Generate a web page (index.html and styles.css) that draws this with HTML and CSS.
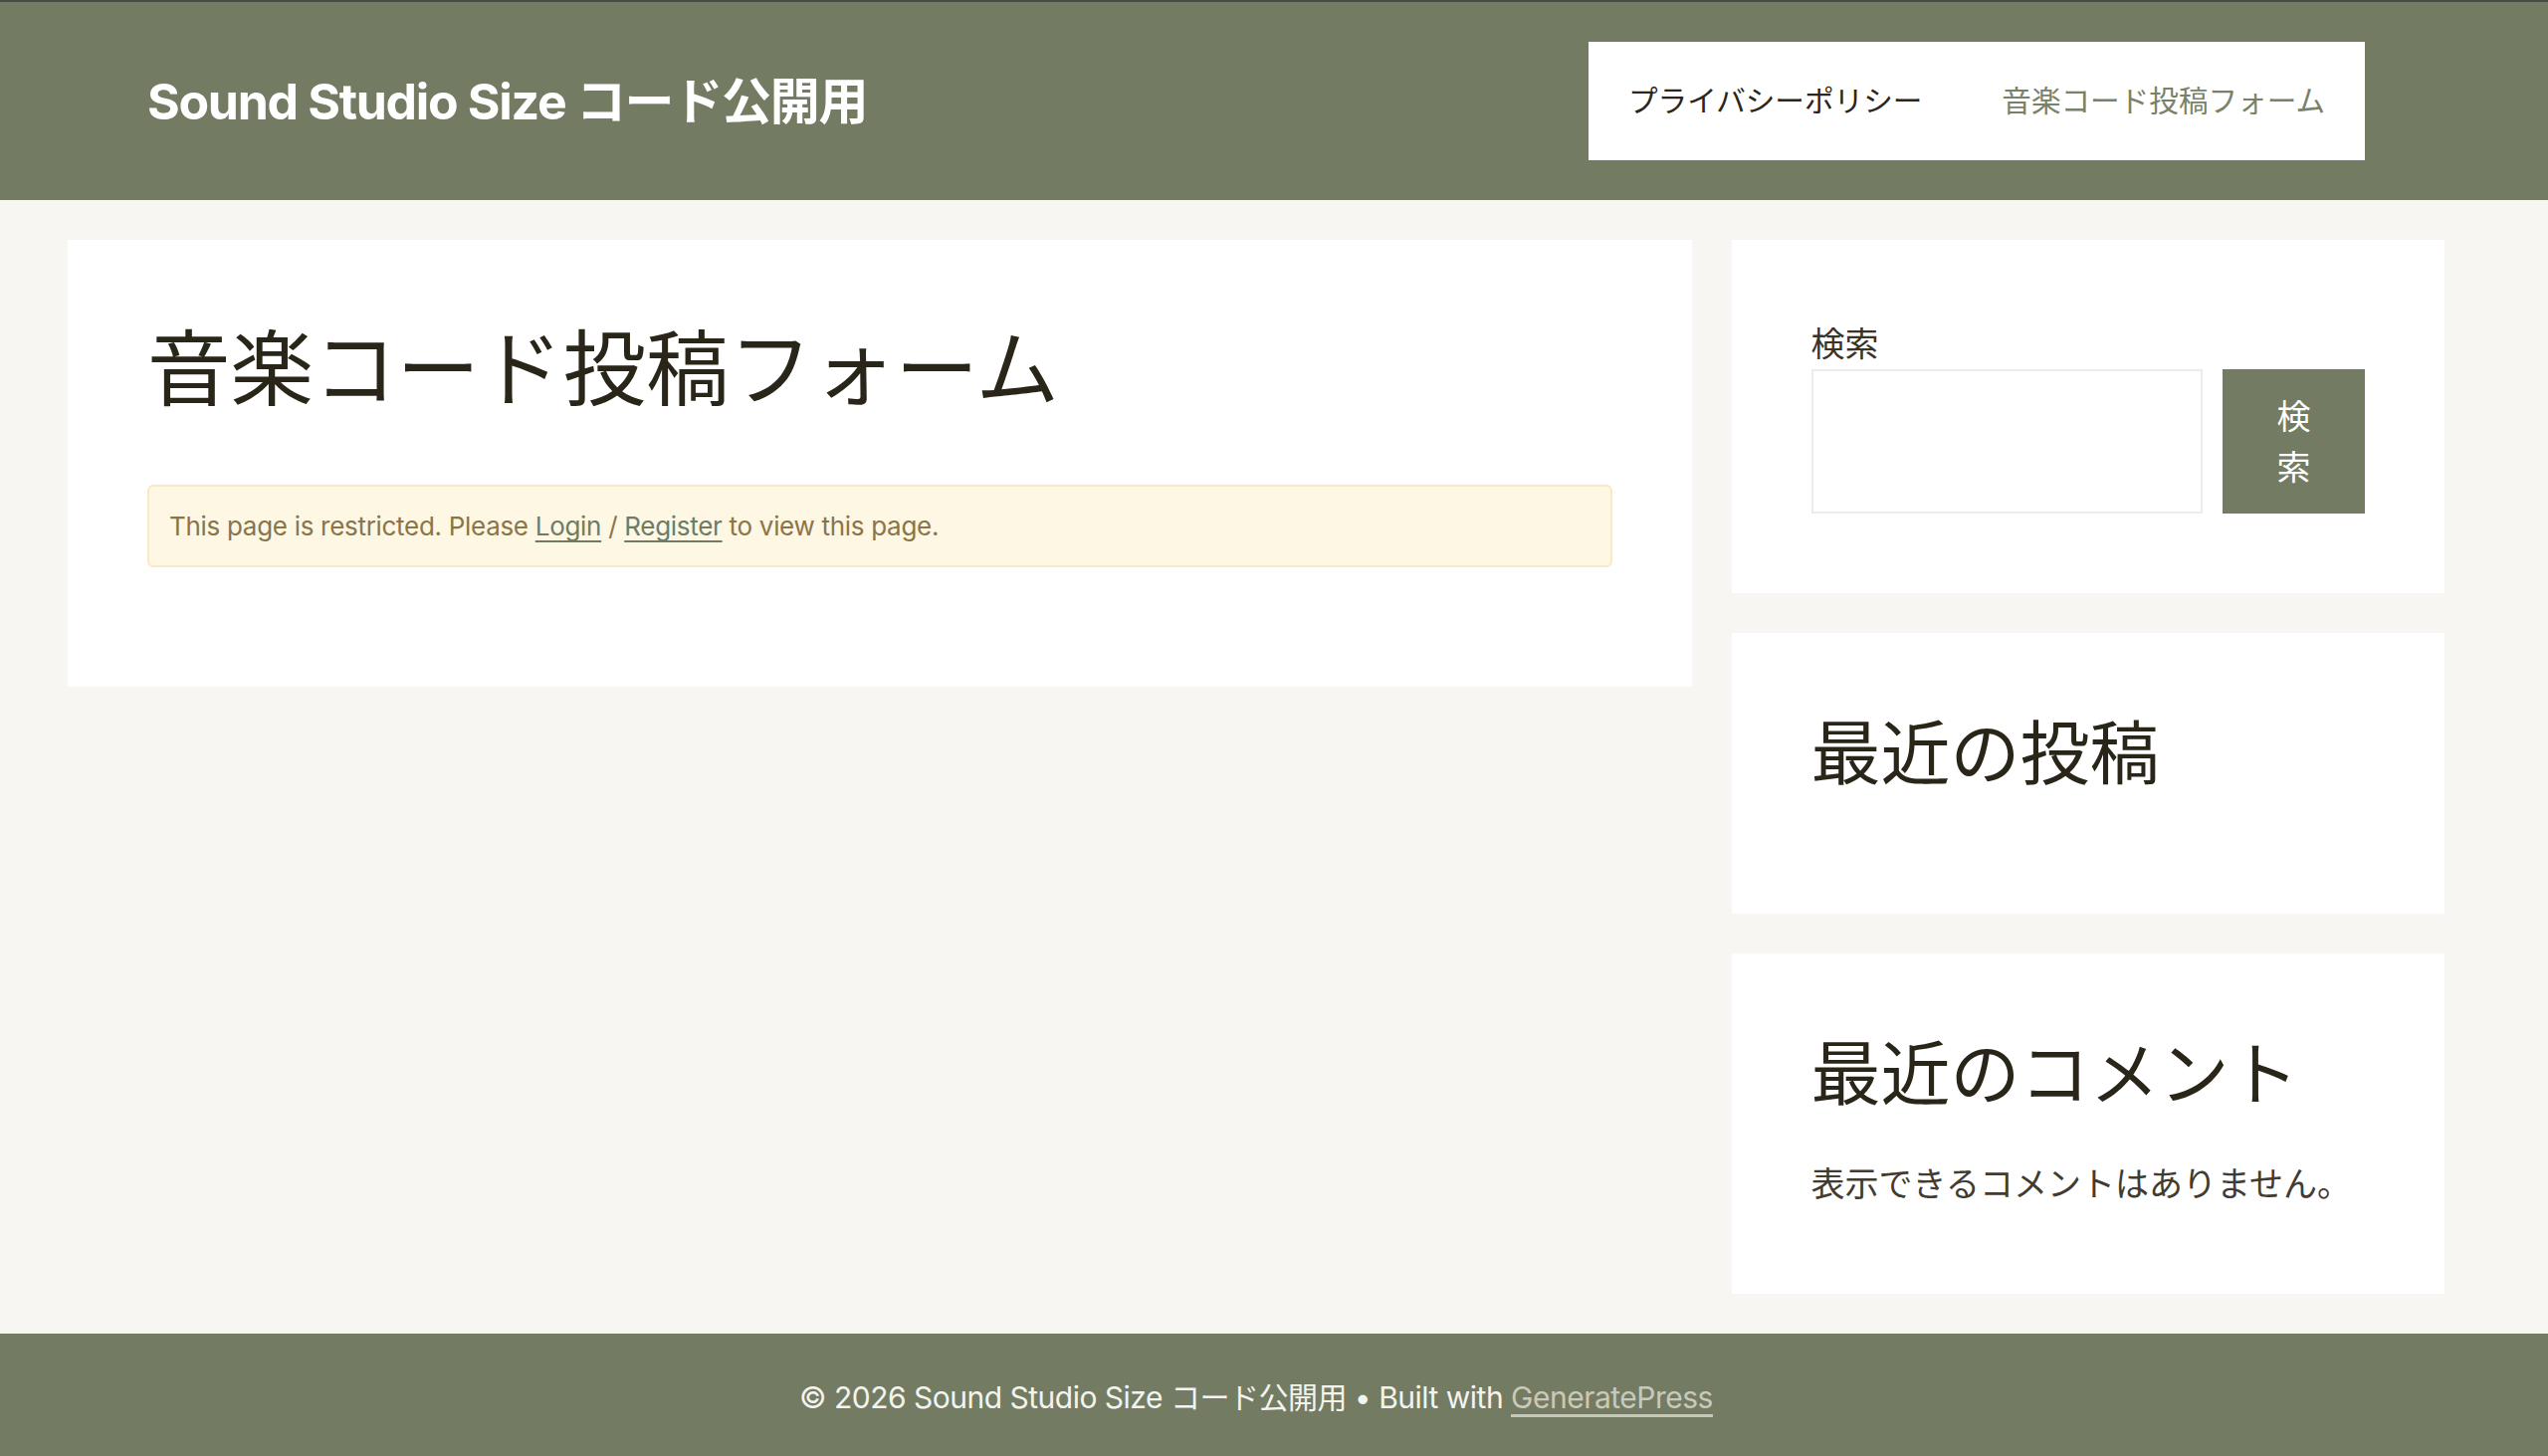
FILE: index.html
```html
<!DOCTYPE html>
<html lang="ja">
<head>
    <meta charset="UTF-8">
    <meta name="viewport" content="width=device-width, initial-scale=1.0">
    <title>音楽コード投稿フォーム – Sound Studio Size コード公開用</title>
    <link rel="stylesheet" href="styles.css">
</head>
<body>
    <!-- ヘッダー -->
    <header class="site-header">
        <div class="grid-container inside-header">
            <p class="site-title"><a href="#">Sound Studio Size コード公開用</a></p>
            <nav class="main-navigation">
                <ul class="menu">
                    <li><a href="#">プライバシーポリシー</a></li>
                    <li class="current-menu-item"><a href="#">音楽コード投稿フォーム</a></li>
                </ul>
            </nav>
        </div>
    </header>

    <!-- 本文 + サイドバー -->
    <div class="grid-container site-content">
        <main class="content-area">
            <article class="inside-article">
                <h1 class="entry-title">音楽コード投稿フォーム</h1>
                <div class="restricted-notice">
                    This page is restricted. Please <a href="#">Login</a> / <a href="#">Register</a> to view this page.
                </div>
            </article>
        </main>

        <aside class="sidebar">
            <div class="widget widget-search">
                <label class="search-label" for="searchInput">検索</label>
                <div class="search-row">
                    <input type="search" id="searchInput" class="search-input">
                    <button class="search-button">検索</button>
                </div>
            </div>

            <div class="widget">
                <h2 class="widget-title">最近の投稿</h2>
            </div>

            <div class="widget">
                <h2 class="widget-title">最近のコメント</h2>
                <p class="no-comments">表示できるコメントはありません。</p>
            </div>
        </aside>
    </div>

    <!-- フッター -->
    <footer class="site-footer">
        <div class="grid-container site-info">
            © 2026 Sound Studio Size コード公開用 • Built with <a href="#">GeneratePress</a>
        </div>
    </footer>
</body>
</html>
```

FILE: styles.css
```css
/* 基本 */
* {
    margin: 0;
    padding: 0;
    box-sizing: border-box;
}

body {
    font-family: Inter, "Noto Sans CJK JP", sans-serif;
    font-size: 34px;
    line-height: 1.5;
    color: #3a3427;
    background-color: #f7f6f2;
}

a {
    color: inherit;
    text-decoration: none;
}

.grid-container {
    width: 2388px;
    margin-left: 68px;
}

/* ヘッダー */
.site-header {
    background: #737c62;
    border-top: 2px solid #4a4b48;
}

.inside-header {
    height: 199px;
    padding: 0 80px;
    display: flex;
    align-items: center;
    justify-content: space-between;
}

.site-title {
    font-size: 50px;
    font-weight: 700;
    line-height: 1.2;
    color: #fff;
    letter-spacing: -1.3px;
}

.main-navigation {
    background: #fff;
}

.menu {
    list-style: none;
    display: flex;
}

.menu a {
    display: block;
    padding: 0 40px;
    font-size: 29.6px;
    line-height: 119px;
    color: #2b2619;
}

.current-menu-item a {
    color: #78826a;
}

/* コンテンツ */
.site-content {
    display: flex;
    margin-top: 40px;
}

.content-area {
    width: 70%;
    padding-right: 40px;
}

.inside-article {
    background: #fff;
    padding: 80px;
}

.entry-title {
    font-size: 83.5px;
    font-weight: 400;
    line-height: 1.2;
    color: #2a2519;
}

.restricted-notice {
    margin: 66px 0 40px;
    padding: 20px;
    background: #fdf7e4;
    border: 2px solid #f7e9c3;
    border-radius: 6px;
    font-size: 26px;
    line-height: 39px;
    letter-spacing: -0.3px;
    color: #8a7549;
}

.restricted-notice a {
    color: #6f7c63;
    text-decoration: underline;
    text-underline-offset: 5px;
}

/* サイドバー */
.sidebar {
    width: 30%;
}

.widget {
    background: #fff;
    padding: 80px;
    margin-bottom: 40px;
}

.search-label {
    display: block;
    line-height: 50px;
    color: #3a3427;
}

.search-row {
    display: flex;
    gap: 20px;
    height: 145px;
}

.search-input {
    flex: 1;
    min-width: 0;
    border: 2px solid #eeece7;
    background: #fff;
    outline: none;
}

.search-button {
    width: 143px;
    padding: 0 40px;
    background: #737c62;
    color: #fff;
    border: none;
    font-family: Inter, "Noto Sans CJK JP", sans-serif;
    font-size: 34px;
    line-height: 51px;
    cursor: pointer;
}

.widget-title {
    font-size: 70px;
    font-weight: 400;
    line-height: 84px;
    color: #2a2519;
    margin-bottom: 38px;
}

.no-comments {
    line-height: 60px;
    color: #413b30;
}

/* フッター */
.site-footer {
    background: #737c62;
}

.site-info {
    padding: 42px 0 38px;
    text-align: center;
    font-size: 30px;
    line-height: 45px;
    letter-spacing: -0.5px;
    color: #f4f3ee;
}

.site-info a {
    color: #c9c9bb;
    text-decoration: underline;
    text-underline-offset: 6px;
}
```
